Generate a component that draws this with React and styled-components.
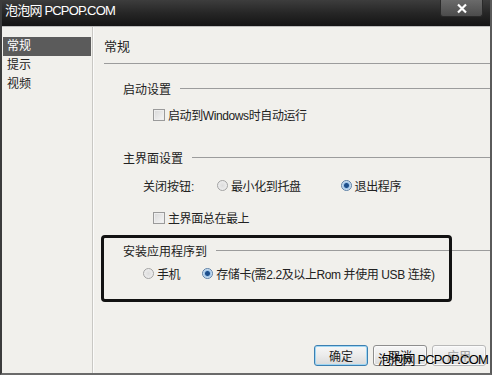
import React from 'react';
import styled, { createGlobalStyle } from 'styled-components';

const GlobalStyle = createGlobalStyle`
  body {
    margin: 0;
    background: #fff;
    font-family: "Liberation Sans", "Noto Sans CJK SC", sans-serif;
  }
`;

const Window = styled.div`
  position: relative;
  width: 492px;
  height: 375px;
  box-sizing: border-box;
  display: flex;
  flex-direction: column;
  border-left: 2px solid #3c3c3c;
  border-right: 2px solid #5a5a5a;
  border-bottom: 2px solid #6a6a6a;
  background: #f1f0ec;
  overflow: hidden;
`;

const TitleBar = styled.div`
  height: 26px;
  flex-shrink: 0;
  display: flex;
  align-items: flex-start;
  justify-content: space-between;
  background: linear-gradient(#3d3d3d, #262626 50%, #141414);
  border-bottom: 1px solid #bdbdbd;
  margin-left: -2px;
  margin-right: -2px;
`;

const Watermark = styled.span`
  font-family: "Liberation Sans", "Noto Sans CJK SC", sans-serif;
  font-size: 13px;
  letter-spacing: -0.8px;
  line-height: 18px;
  color: ${(p) => p.color};
`;

const TitleMark = styled(Watermark)`
  margin: 2px 0 0 5px;
`;

const CloseButton = styled.div`
  width: 41px;
  height: 16px;
  margin-right: 9px;
  background: linear-gradient(#6a6a6a, #4c4c4c);
  border: 1px solid #2a2a2a;
  border-top: none;
  border-radius: 0 0 3px 3px;
  display: flex;
  align-items: center;
  justify-content: center;
`;

const Body = styled.div`
  flex: 1;
  display: flex;
  min-height: 0;
`;

const Sidebar = styled.div`
  width: 90px;
  padding-top: 10px;
  border-right: 1px solid #c9c8c4;
  box-shadow: 1px 0 0 #fbfbfa;
  display: flex;
  flex-direction: column;
`;

const NavItem = styled.div`
  height: 19px;
  line-height: 19px;
  margin: 0 1px;
  padding-left: 4px;
  font-size: 12px;
  color: ${(p) => (p.active ? '#fff' : '#222')};
  background: ${(p) => (p.active ? '#5b5b5b' : 'transparent')};
`;

const Main = styled.div`
  flex: 1;
  display: flex;
  flex-direction: column;
  padding-left: 11px;
`;

const Header = styled.div`
  margin-top: 10px;
  height: 26px;
  line-height: 19px;
  font-size: 13px;
  color: #222;
  border-bottom: 1px solid #9c9c9c;
`;

const GroupTitle = styled.div`
  display: flex;
  align-items: center;
  gap: 9px;
  height: 19px;
  margin-top: ${(p) => p.top}px;
  padding-left: 19px;
  font-size: 12px;
  color: #222;
  &::after {
    content: '';
    flex: 1;
    height: 1px;
    background: #9c9c9c;
  }
`;

const Row = styled.div`
  display: flex;
  align-items: center;
  height: 19px;
  margin-top: ${(p) => p.top}px;
  padding-left: ${(p) => p.indent}px;
  font-size: 12px;
  letter-spacing: -0.4px;
  color: #222;
`;

const Label = styled.span`
  width: 74px;
  letter-spacing: 0;
`;

const Option = styled.label`
  display: flex;
  align-items: center;
  gap: 3px;
  margin-right: ${(p) => p.gap || 0}px;
`;

const Box = styled.span`
  width: 10px;
  height: 10px;
  border: 1px solid #9a9a9a;
  background: linear-gradient(135deg, #d8d8d8, #f6f6f6);
  box-shadow: inset 0 0 0 1px #eee;
`;

const Radio = styled.span`
  width: 9px;
  height: 9px;
  border-radius: 50%;
  border: 1px solid ${(p) => (p.checked ? '#5b7fa6' : '#a3a3a3')};
  background: ${(p) =>
    p.checked
      ? 'radial-gradient(circle, #1d4f8c 0 2px, #9cc3e8 3px, #eef4fa 5px)'
      : 'radial-gradient(circle, #dcdcdc, #f4f4f4)'};
`;

const InstallGroup = styled.div`
  position: relative;
  margin-top: 14px;
`;

const Frame = styled.div`
  position: absolute;
  left: -3px;
  top: -6px;
  width: 345px;
  height: 61px;
  border: 3px solid #121212;
  border-radius: 4px;
  pointer-events: none;
`;

const Footer = styled.div`
  margin-top: auto;
  display: flex;
  justify-content: flex-end;
  gap: 5px;
  padding: 0 4px 7px 0;
`;

const Button = styled.button`
  width: 54px;
  height: 21px;
  padding: 0;
  font-family: "Noto Sans CJK SC", sans-serif;
  font-size: 12px;
  color: ${(p) => (p.disabled ? '#a0a0a0' : '#222')};
  border-radius: 3px;
  border: 1px solid ${(p) => (p.primary ? '#3c7fb1' : p.disabled ? '#b8b8b8' : '#8e8e8e')};
  background: linear-gradient(#f7f7f7, #ebebeb 50%, #dadada);
  box-shadow: ${(p) => (p.primary ? 'inset 0 0 0 1px #9fd6f3' : 'inset 0 0 0 1px #fbfbfb')};
`;

const BottomMark = styled(Watermark)`
  position: absolute;
  right: 2px;
  bottom: 4px;
`;

const App = () => {
  return (
    <>
      <GlobalStyle />
      <Window>
        <TitleBar>
          <TitleMark color="#fff">泡泡网 PCPOP.COM</TitleMark>
          <CloseButton>
            <svg width="12" height="11" viewBox="0 0 12 11">
              <path d="M2 1.5 L10 9.5 M10 1.5 L2 9.5" stroke="#fff" strokeWidth="2.2" />
            </svg>
          </CloseButton>
        </TitleBar>
        <Body>
          <Sidebar>
            <NavItem active>常规</NavItem>
            <NavItem>提示</NavItem>
            <NavItem>视频</NavItem>
          </Sidebar>
          <Main>
            <Header>常规</Header>

            <GroupTitle top={15}>启动设置</GroupTitle>
            <Row top={7} indent={49}>
              <Option>
                <Box />
                启动到Windows时自动运行
              </Option>
            </Row>

            <GroupTitle top={24}>主界面设置</GroupTitle>
            <Row top={9} indent={39}>
              <Label>关闭按钮:</Label>
              <Option gap={40}>
                <Radio />
                最小化到托盘
              </Option>
              <Option>
                <Radio checked />
                退出程序
              </Option>
            </Row>
            <Row top={13} indent={49}>
              <Option>
                <Box />
                主界面总在最上
              </Option>
            </Row>

            <InstallGroup>
              <GroupTitle top={0}>安装应用程序到</GroupTitle>
              <Row top={4} indent={39}>
                <Option gap={22}>
                  <Radio />
                  手机
                </Option>
                <Option>
                  <Radio checked />
                  存储卡(需2.2及以上Rom 并使用 USB 连接)
                </Option>
              </Row>
              <Frame />
            </InstallGroup>

            <Footer>
              <Button primary>确定</Button>
              <Button>取消</Button>
              <Button disabled>应用</Button>
            </Footer>
          </Main>
        </Body>
        <BottomMark color="#000">泡泡网 PCPOP.COM</BottomMark>
      </Window>
    </>
  );
};

export default App;
